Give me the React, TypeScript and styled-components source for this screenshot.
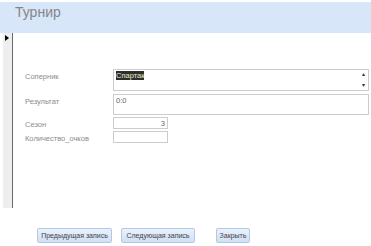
import React from "react";
import styled, { createGlobalStyle } from "styled-components";

const GlobalStyle = createGlobalStyle`
  html, body {
    margin: 0;
    padding: 0;
    background: #ffffff;
  }
  body {
    font-family: "Liberation Sans", Arial, sans-serif;
  }
`;

function App() {
  return (
    <>
      <GlobalStyle />
      <Page>
        <Header>
          <Title>Турнир</Title>
        </Header>
        <Main>
          <Selector>
            <Arrow />
          </Selector>
          <Form>
            <Label>Соперник</Label>
            <Field $h={22}>
              <Selected>Спартак</Selected>
              <Scroll>
                <span>▴</span>
                <span>▾</span>
              </Scroll>
            </Field>
            <Label>Результат</Label>
            <Field $h={21}>0:0</Field>
            <Label>Сезон</Label>
            <Field $h={12} $w={55} $right>
              3
            </Field>
            <Label>Количество_очков</Label>
            <Field $h={12} $w={55} />
          </Form>
        </Main>
        <Footer>
          <Button $w={75}>Предыдущая запись</Button>
          <Button $w={74} $ml={9}>
            Следующая запись
          </Button>
          <Button $w={34} $ml={21}>
            Закрыть
          </Button>
        </Footer>
      </Page>
    </>
  );
}

const Page = styled.div`
  width: 371px;
  height: 246px;
  overflow: hidden;
  padding-top: 2px;
  box-sizing: border-box;
  display: flex;
  flex-direction: column;
`;

const Header = styled.div`
  height: 31px;
  background-color: #d8e6f9;
  background-image: radial-gradient(#c8d8f0 0.6px, transparent 0.7px);
  background-size: 2px 2px;
  padding-left: 15px;
  box-sizing: border-box;
`;

const Title = styled.div`
  color: #858585;
  font-size: 14px;
  line-height: 16px;
  padding-top: 2px;
`;

const Main = styled.div`
  display: flex;
  height: 175px;
`;

const Selector = styled.div`
  width: 9px;
  margin-left: 3px;
  background-color: #eeeeee;
  background-image: radial-gradient(#d8d8d8 0.6px, transparent 0.7px);
  background-size: 2px 2px;
  border-right: 1px solid #6a6a6a;
  position: relative;
`;

const Arrow = styled.div`
  position: absolute;
  left: 2px;
  top: 2px;
  width: 0;
  height: 0;
  border-top: 3px solid transparent;
  border-bottom: 3px solid transparent;
  border-left: 4px solid #000;
`;

const Form = styled.div`
  flex: 1;
  display: grid;
  grid-template-columns: 88px 1fr;
  grid-auto-rows: min-content;
  row-gap: 2px;
  padding: 36px 2px 0 12px;
  align-content: start;
  & > :nth-child(2) {
    margin-bottom: 1px;
  }
`;

const Label = styled.div`
  color: #8c8c8c;
  font-size: 7.5px;
  line-height: 9px;
  padding-top: 3px;
`;

const Field = styled.div<{ $h: number; $w?: number; $right?: boolean }>`
  position: relative;
  height: ${(p) => p.$h}px;
  width: ${(p) => (p.$w ? `${p.$w}px` : "auto")};
  box-sizing: border-box;
  border: 1px solid #cccccc;
  background: #ffffff;
  color: #666;
  font-size: 7.5px;
  line-height: 9px;
  padding: 1px 2px;
  text-align: ${(p) => (p.$right ? "right" : "left")};
`;

const Selected = styled.span`
  background: #2e2e2e;
  color: #e8f0c8;
`;

const Scroll = styled.div`
  position: absolute;
  right: 1px;
  top: 1px;
  bottom: 1px;
  width: 7px;
  display: flex;
  flex-direction: column;
  justify-content: space-between;
  align-items: center;
  font-size: 6px;
  line-height: 7px;
  color: #333;
`;

const Footer = styled.div`
  display: flex;
  padding: 20px 0 0 37px;
`;

const Button = styled.div<{ $w: number; $ml?: number }>`
  width: ${(p) => p.$w}px;
  margin-left: ${(p) => p.$ml || 0}px;
  height: 15px;
  box-sizing: border-box;
  border: 1px solid #b4c8e4;
  border-radius: 2px;
  background: linear-gradient(#eaf2fd, #cfdff5);
  color: #444;
  font-size: 7px;
  line-height: 13px;
  text-align: center;
  white-space: nowrap;
`;

export default App;
